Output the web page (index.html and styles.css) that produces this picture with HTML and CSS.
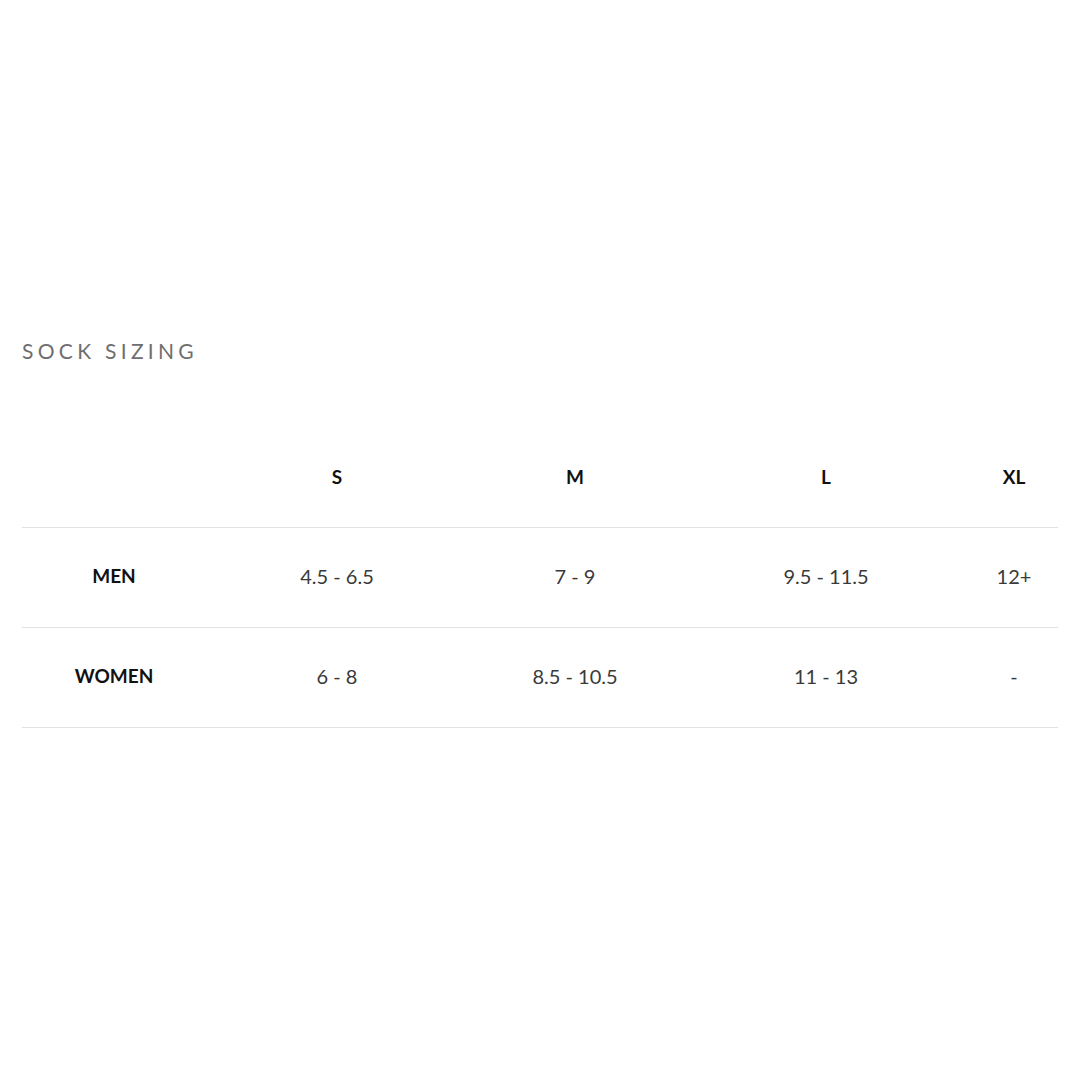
FILE: index.html
```html
<!DOCTYPE html>
<html lang="en">
<head>
<meta charset="utf-8">
<title>Sock Sizing</title>
<link rel="stylesheet" href="styles.css">
</head>
<body>
<main class="page">
  <h2 class="title">SOCK SIZING</h2>
  <div class="chart">
    <div class="row head">
      <div class="cell label"></div>
      <div class="cell">S</div>
      <div class="cell">M</div>
      <div class="cell">L</div>
      <div class="cell">XL</div>
    </div>
    <div class="row">
      <div class="cell label">MEN</div>
      <div class="cell">4.5 - 6.5</div>
      <div class="cell">7 - 9</div>
      <div class="cell">9.5 - 11.5</div>
      <div class="cell">12+</div>
    </div>
    <div class="row">
      <div class="cell label">WOMEN</div>
      <div class="cell">6 - 8</div>
      <div class="cell">8.5 - 10.5</div>
      <div class="cell">11 - 13</div>
      <div class="cell">-</div>
    </div>
  </div>
</main>
</body>
</html>
```
FILE: styles.css
```css
html, body {
  margin: 0;
  padding: 0;
  background: #ffffff;
}
body {
  font-family: Lato, "Open Sans", "Liberation Sans", sans-serif;
  color: #333333;
}
.page {
  padding: 339px 22px 0 22px;
}
.title {
  margin: 0;
  font-size: 21px;
  line-height: 24px;
  font-weight: 400;
  letter-spacing: 4.3px;
  color: #6e6e6e;
}
.chart {
  margin-top: 65px;
}
.row {
  display: grid;
  grid-template-columns: 184px 262px 214px 288px 88px;
  align-items: center;
  height: 99px;
  border-bottom: 1px solid #e2e2e2;
}
.cell {
  text-align: center;
  font-size: 20px;
  line-height: 24px;
  color: #3a3a3a;
  padding-bottom: 3px;
}
.label {
  font-weight: 700;
  color: #111111;
  font-size: 19px;
}
.head .cell {
  font-weight: 700;
  color: #111111;
  font-size: 19px;
  padding-bottom: 1px;
}
```
